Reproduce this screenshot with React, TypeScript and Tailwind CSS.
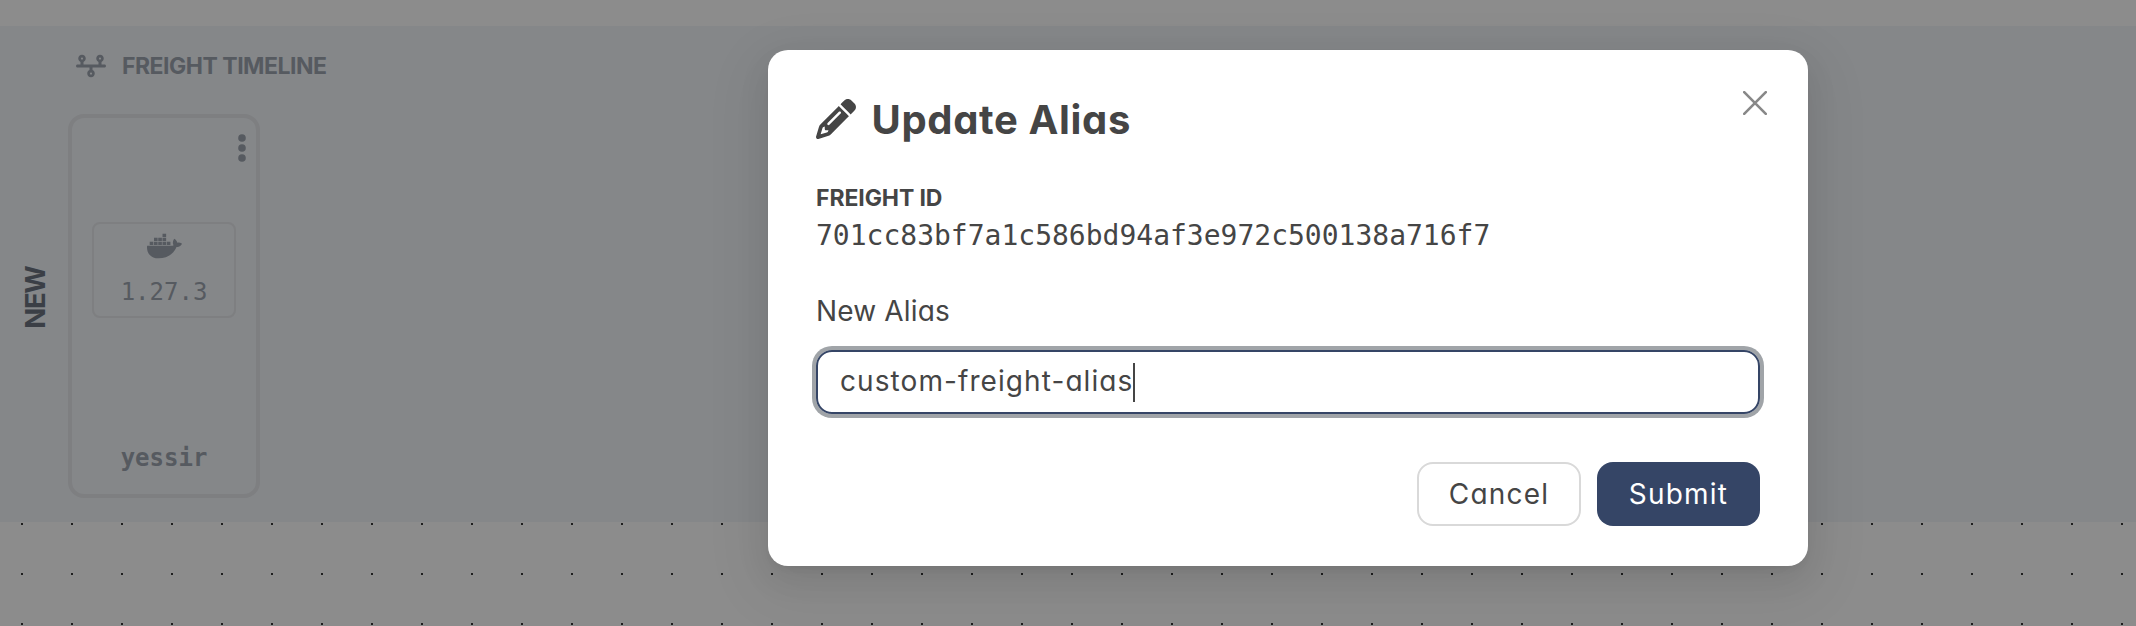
import { FaDocker, FaPencil, FaTimeline } from "react-icons/fa6";

function FreightCard() {
  return (
    <div className="flex h-96 w-48 flex-col items-center rounded-2xl border-4 border-[#7e7f81] text-[#565a60]">
      <div className="flex h-[104px] w-full justify-end pr-[10px] pt-4">
        <svg viewBox="0 0 8 28" className="h-7 w-2" fill="currentColor">
          <circle cx="4" cy="4" r="3.8" />
          <circle cx="4" cy="14" r="3.8" />
          <circle cx="4" cy="24" r="3.8" />
        </svg>
      </div>
      <div className="flex h-24 w-36 flex-col items-center rounded-lg border-2 border-[#7e7f81] pt-2">
        <FaDocker className="h-7 w-[35px]" />
        <span className="mt-4 font-['DejaVu_Sans_Mono',monospace] text-2xl leading-8">1.27.3</span>
      </div>
      <div className="mt-auto pb-[18px] font-['DejaVu_Sans_Mono',monospace] text-2xl font-bold leading-9">yessir</div>
    </div>
  );
}

function Background() {
  return (
    <div className="flex h-full flex-col bg-[#8c8c8c] pt-[26px]">
      <section className="flex h-[496px] bg-[#858789]">
        <div className="flex w-[68px] items-center justify-center pl-[3px] pt-[48px]">
          <span className="-rotate-90 text-[27.5px] font-bold tracking-[-1.3px] text-[#3b3f46]">NEW</span>
        </div>
        <div className="flex flex-col">
          <div className="flex h-[88px] items-start pl-2 pt-6 text-[#565a60]">
            <FaTimeline className="mt-[4px] h-6 w-[30px]" />
            <h2 className="ml-4 text-[23px] font-bold leading-8 tracking-[-0.5px]">FREIGHT TIMELINE</h2>
          </div>
          <FreightCard />
        </div>
      </section>
      <div className="flex-1 [background:conic-gradient(from_0deg_at_2px_2px,transparent_75%,#1e1e1e_0)_21px_1px/50px_50px]" />
    </div>
  );
}

function UpdateAliasModal() {
  return (
    <div
      role="dialog"
      className="absolute left-[768px] top-[50px] flex h-[516px] w-[1040px] flex-col rounded-[20px] bg-white px-12 pb-10 pt-10 text-[#454545] shadow-[0_12px_32px_0_rgba(0,0,0,0.08),0_6px_12px_-8px_rgba(0,0,0,0.12),0_18px_56px_16px_rgba(0,0,0,0.05)]"
    >
      <header className="flex h-[60px] items-start">
        <FaPencil className="mt-[9px] size-10" />
        <h1 className="ml-[15.5px] text-[40px] font-bold leading-[60px] tracking-[0.65px]">Update Alias</h1>
        <button aria-label="Close" className="ml-auto mr-[-7px] mt-[1px] text-[#888888]">
          <svg viewBox="0 0 24 24" className="size-6" fill="none" stroke="currentColor" strokeWidth="2.6" strokeLinecap="round">
            <path d="M1.2 1.2 22.8 22.8M22.8 1.2 1.2 22.8" />
          </svg>
        </button>
      </header>
      <div className="mt-8 text-[23px] font-bold leading-8 tracking-[-0.1px]">FREIGHT ID</div>
      <div className="mt-0.5 font-['DejaVu_Sans_Mono',monospace] text-[28px] leading-10">701cc83bf7a1c586bd94af3e972c500138a716f7</div>
      <label className="mt-[33px] text-[28px] leading-[44px] tracking-[0.15px]">New Alias</label>
      <div className="mt-[17px] flex h-16 shrink-0 items-center rounded-2xl border-2 border-[#354566] pl-[22px] ring-4 ring-[#a0a4a8]">
        <span className="pb-0.5 text-[28px] tracking-[1.08px]">custom-freight-alias</span>
        <span className="h-[39px] w-0.5 bg-[#454545]" />
      </div>
      <footer className="mt-12 flex justify-end gap-4 text-[28px] tracking-[1.2px]">
        <button className="h-16 w-[164px] rounded-2xl border-2 border-[#d9d9d9]">Cancel</button>
        <button className="h-16 w-[163px] rounded-2xl bg-[#354566] text-white">Submit</button>
      </footer>
    </div>
  );
}

export default function App() {
  return (
    <main className="relative h-[626px] w-[2136px] overflow-hidden font-['Inter',sans-serif] [font-feature-settings:'cv11']">
      <Background />
      <UpdateAliasModal />
    </main>
  );
}
